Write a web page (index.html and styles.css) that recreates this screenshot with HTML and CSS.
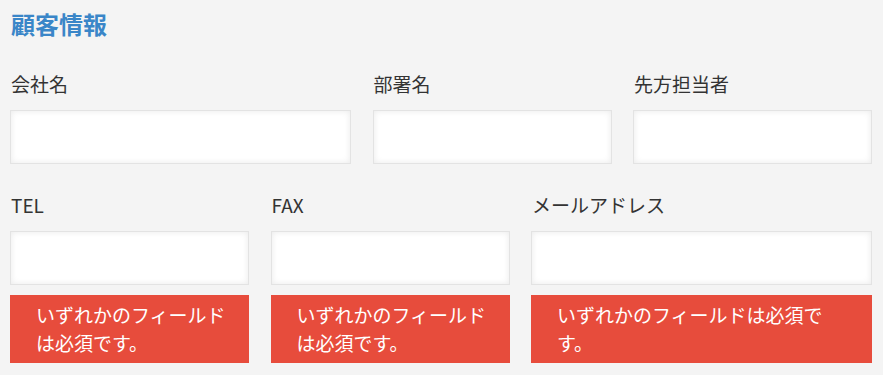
FILE: index.html
```html
<!DOCTYPE html>
<html lang="ja">
<head>
<meta charset="utf-8">
<title>顧客情報</title>
<link rel="stylesheet" href="styles.css">
</head>
<body>
<div class="page">
  <h2 class="title">顧客情報</h2>
  <div class="row row-top">
    <div class="field">
      <label class="label">会社名</label>
      <input class="input" type="text">
    </div>
    <div class="field">
      <label class="label">部署名</label>
      <input class="input" type="text">
    </div>
    <div class="field">
      <label class="label">先方担当者</label>
      <input class="input" type="text">
    </div>
  </div>
  <div class="row row-bottom">
    <div class="field">
      <label class="label">TEL</label>
      <input class="input" type="text">
      <div class="error">いずれかのフィールドは必須です。</div>
    </div>
    <div class="field">
      <label class="label">FAX</label>
      <input class="input" type="text">
      <div class="error">いずれかのフィールドは必須です。</div>
    </div>
    <div class="field">
      <label class="label">メールアドレス</label>
      <input class="input" type="text">
      <div class="error">いずれかのフィールドは必須です。</div>
    </div>
  </div>
</div>
</body>
</html>
```
FILE: styles.css
```css
html, body {
  margin: 0;
  padding: 0;
  background: #f4f4f4;
}
body {
  font-family: "Noto Sans CJK JP", "Noto Sans", sans-serif;
  color: #333333;
}
.page {
  padding: 6px 11px 0 10px;
}
.title {
  margin: 0 0 28px 1px;
  font-size: 24px;
  line-height: 36px;
  font-weight: bold;
  color: #3a86c8;
}
.row {
  display: grid;
  column-gap: 21.5px;
}
.row-top {
  grid-template-columns: 341px 239px 239px;
  margin-bottom: 27px;
}
.row-bottom {
  grid-template-columns: 239px 239px 341px;
}
.field {
  display: flex;
  flex-direction: column;
}
.label {
  display: block;
  font-size: 19px;
  line-height: 28px;
  margin: 0 0 12px 1px;
  color: #333333;
}
.input {
  box-sizing: border-box;
  width: 100%;
  height: 54px;
  margin: 0;
  border: 1px solid #e3e3e3;
  background: #ffffff;
  box-shadow: inset 0 0 6px rgba(0, 0, 0, 0.09);
  outline: none;
  font: inherit;
}
.error {
  margin-top: 10px;
  padding: 6px 18px 6px 26px;
  background: #e74c3c;
  color: #ffffff;
  font-size: 19px;
  line-height: 28px;
}
```
